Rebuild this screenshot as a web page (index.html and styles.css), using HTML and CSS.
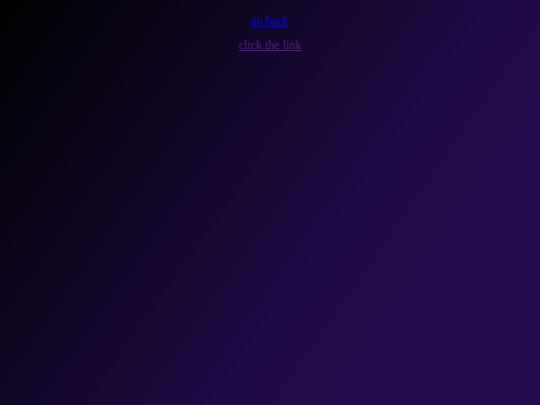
FILE: index.html
```html
<!DOCTYPE html>
<html>
<head>
<meta charset="utf-8">
<link rel="stylesheet" href="styles.css">
</head>
<body>
<div class="links">
  <a class="back" href="#back">go back</a>
  <a class="visited" href="#link">click the link</a>
</div>
</body>
</html>
```

FILE: styles.css
```css
html, body {
  margin: 0;
  height: 100%;
}
body {
  background: linear-gradient(125deg, #000000 0%, #1e0a44 60%, #210b4a 75%, #210b4a 100%);
  font-family: "Liberation Serif", "Times New Roman", serif;
  font-size: 12px;
}
.links {
  display: flex;
  flex-direction: column;
  align-items: center;
  gap: 9px;
  padding-top: 14px;
}
.back {
  color: #0000ee;
}
.visited {
  color: #551a8b;
}
```
